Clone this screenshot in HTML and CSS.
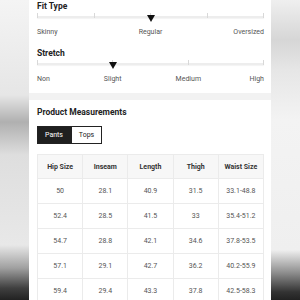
FILE: index.html
```html
<!DOCTYPE html>
<html>
<head>
	<title>Size Guide</title>
	<meta charset="utf-8" />
	<link rel="stylesheet" href="styles.css">
</head>
<body>
	<div class="panel">

		<div class="card fit">
			<div class="group">
				<h3>Fit Type</h3>
				<div class="slider">
					<div class="track">
						<i></i><i></i><i></i><i></i><i></i>
					</div>
					<span class="marker" style="left: 50%"></span>
				</div>
				<div class="labels">
					<span>Skinny</span>
					<span>Regular</span>
					<span>Oversized</span>
				</div>
			</div>

			<div class="group">
				<h3>Stretch</h3>
				<div class="slider">
					<div class="track">
						<i></i><i></i><i></i><i></i>
					</div>
					<span class="marker" style="left: 33.33%"></span>
				</div>
				<div class="labels">
					<span>Non</span>
					<span>Slight</span>
					<span>Medium</span>
					<span>High</span>
				</div>
			</div>
		</div>

		<div class="card measure">
			<h3>Product Measurements</h3>
			<div class="tabs">
				<button class="tab on">Pants</button>
				<button class="tab">Tops</button>
			</div>
			<table>
				<tr>
					<th>Hip Size</th>
					<th>Inseam</th>
					<th>Length</th>
					<th>Thigh</th>
					<th>Waist Size</th>
				</tr>
				<tr><td>50</td><td>28.1</td><td>40.9</td><td>31.5</td><td>33.1-48.8</td></tr>
				<tr><td>52.4</td><td>28.5</td><td>41.5</td><td>33</td><td>35.4-51.2</td></tr>
				<tr><td>54.7</td><td>28.8</td><td>42.1</td><td>34.6</td><td>37.8-53.5</td></tr>
				<tr><td>57.1</td><td>29.1</td><td>42.7</td><td>36.2</td><td>40.2-55.9</td></tr>
				<tr><td>59.4</td><td>29.4</td><td>43.3</td><td>37.8</td><td>42.5-58.3</td></tr>
			</table>
		</div>

	</div>
</body>
</html>
```

FILE: styles.css
```css
body {
	margin: 0;
	height: 300px;
	overflow: hidden;
	font-family: Roboto, "Liberation Sans", sans-serif;
	background:
		linear-gradient(to bottom, #f4f4f4 0px, #e6e6e6 95px, #b0b0b0 122px, #dedede 155px, #e8e8e8 245px, #a0a0a0 268px, #404040 288px, #222 300px) left top / 29px 100% no-repeat,
		linear-gradient(to bottom, #efefef 0px, #d6d6d6 40px, #e6e6e6 70px, #f3f3f3 120px, #efefef 250px, #919191 272px, #333 292px, #222 300px) right top / 29px 100% no-repeat,
		#eeeeee;
}

.panel {
	width: 242px;
	margin: 0 auto;
	height: 300px;
	overflow: hidden;
	background-color: #f2f2f2;
}

.card {
	background-color: #ffffff;
	padding: 0 7px 0 8px;
}

h3 {
	margin: 0;
	font-size: 8.5px;
	line-height: 12px;
	font-weight: 700;
	color: #222;
}

/* fit / stretch sliders */
.fit {
	padding-bottom: 8px;
}

.group + .group {
	margin-top: 9px;
}

.slider {
	position: relative;
	height: 10px;
}

.track {
	position: relative;
	top: 4px;
	height: 2px;
	background-color: #ededed;
	box-shadow: 0 1px 1px rgba(0, 0, 0, 0.05);
	display: flex;
	justify-content: space-between;
	align-items: flex-end;
}

.track i {
	width: 1px;
	height: 5px;
	background-color: #d8d8d8;
}

.marker {
	position: absolute;
	top: 3px;
	margin-left: -4px;
	border-left: 4px solid transparent;
	border-right: 4px solid transparent;
	border-top: 7px solid #111;
}

.labels {
	margin-top: 4px;
	display: flex;
	justify-content: space-between;
	font-size: 7px;
	line-height: 12px;
	color: #555;
}

.labels span {
	width: 0;
	display: flex;
	justify-content: center;
	white-space: nowrap;
}

.labels span:first-child {
	justify-content: flex-start;
}

.labels span:last-child {
	justify-content: flex-end;
}

/* measurements */
.measure {
	margin-top: 7px;
	padding-top: 6px;
	height: 300px;
}

.tabs {
	margin-top: 8px;
	display: flex;
}

.tab {
	height: 18px;
	padding: 0;
	border: 1px solid #222;
	background-color: #fff;
	color: #222;
	font-family: Roboto, "Liberation Sans", sans-serif;
	font-size: 7px;
	width: 31px;
}

.tab.on {
	width: 34px;
	background-color: #1f1f1f;
	color: #fff;
}

table {
	margin-top: 10px;
	width: 227px;
	border-collapse: collapse;
	table-layout: fixed;
	font-size: 7px;
	text-align: center;
}

th, td {
	border: 1px solid #ebebeb;
	padding: 0;
}

th {
	height: 23px;
	background-color: #f7f7f7;
	color: #333;
	font-weight: 700;
}

td {
	height: 24px;
	color: #555;
}
```
